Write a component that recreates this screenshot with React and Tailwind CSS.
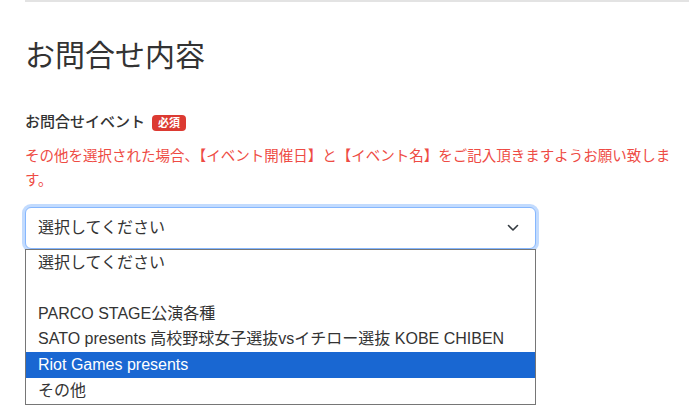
import { useState } from "react";

const FONT = {
  fontFamily:
    '"Liberation Sans", "Noto Sans CJK JP", "Noto Sans", sans-serif',
};

const OPTIONS = [
  "選択してください",
  "",
  "PARCO STAGE公演各種",
  "SATO presents 高校野球女子選抜vsイチロー選抜 KOBE CHIBEN",
  "Riot Games presents",
  "その他",
];

/* Chevron */
function Chevron() {
  return (
    <svg width="12" height="8" viewBox="0 0 12 8" fill="none">
      <path
        d="M1.5 1.5L6 6l4.5-4.5"
        stroke="#343a40"
        strokeWidth="1.6"
        strokeLinecap="round"
        strokeLinejoin="round"
      />
    </svg>
  );
}

/* Select with open list */
function EventSelect() {
  const [active] = useState(4);
  return (
    <div className="relative w-[511px] mt-[15px]">
      <div className="h-[42px] flex items-center justify-between pl-[12px] pr-[16px] bg-white border border-[#86b7fe] rounded-[6px] shadow-[0_0_0_3px_rgba(13,110,253,0.25)] text-[16px] text-[#333]">
        <span>選択してください</span>
        <Chevron />
      </div>
      <ul className="absolute top-full left-0 w-full bg-white border border-[#767676] text-[16px] text-[#333]">
        {OPTIONS.map((o, i) => (
          <li
            key={i}
            className={`flex items-center pl-[12px] whitespace-nowrap ${
              i < 4 ? "h-[25.5px]" : "h-[26px]"
            } ${i === active ? "bg-[#1967d2] text-white" : ""}`}
          >
            {o}
          </li>
        ))}
      </ul>
    </div>
  );
}

export default function App() {
  return (
    <div className="min-h-[415px] bg-white pl-[25px]" style={FONT}>
      <div className="border-t-2 border-[#e3e3e3]" />
      <h2 className="mt-[36px] text-[30px] leading-[36px] text-[#333]">
        お問合せ内容
      </h2>
      <div className="mt-[37px] flex items-center gap-[7px] h-[22px]">
        <span className="text-[15px] text-[#333] font-medium">
          お問合せイベント
        </span>
        <span className="mt-[2px] h-[16px] px-[6px] flex items-center rounded-[4px] bg-[#dc3a32] text-white text-[11px] font-bold leading-none">
          必須
        </span>
      </div>
      <p className="mt-[11px] pr-[8px] text-[14.5px] leading-[24px] text-[#ee4b44]">
        その他を選択された場合、【イベント開催日】と【イベント名】をご記入頂きますようお願い致します。
      </p>
      <EventSelect />
    </div>
  );
}
